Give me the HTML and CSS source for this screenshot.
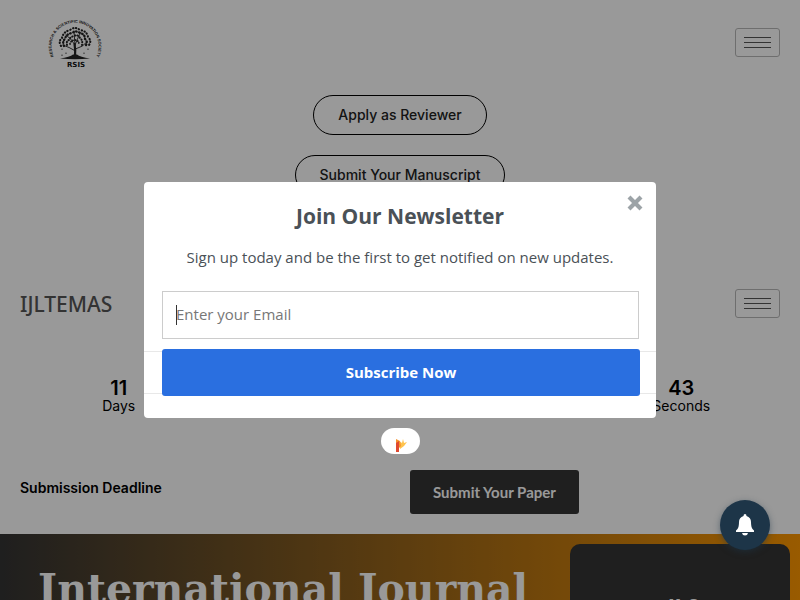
FILE: index.html
```html
<!DOCTYPE html>
<html lang="en">
<head>
<meta charset="utf-8">
<meta name="viewport" content="width=device-width, initial-scale=1">
<title>IJLTEMAS</title>
<link rel="stylesheet" href="styles.css">
</head>
<body>
<header class="bar bar-top">
  <a class="logo" href="#" aria-label="RSIS">
    <svg width="60" height="60" viewBox="0 0 60 60">
      <defs><path id="ring" d="M13 49.500A23.500 23.500 0 1 1 47 49.500"/></defs>
      <text class="ring-text" text-anchor="middle"><textPath href="#ring" startOffset="50%">RESEARCH &amp; SCIENTIFIC INNOVATION SOCIETY</textPath></text>
      <g fill="none" stroke="#222" stroke-linecap="round">
        <path stroke-width="2.200" d="M30 43C30.500 38 30.500 36 29.500 31"/>
        <path stroke-width="0.900" d="M30.500 38Q24 34 18 32M30.500 36Q38 34 42 29M30 32Q26 25 21 22M30 32Q33 24 36 19M30 32L29 18"/>
        <path stroke-width="2.100" stroke-dasharray="0.400 2.600" d="M16 33Q13 28 17 25Q18 19 25 17Q30 13 35 17Q42 18 43 24Q47 28 44 32"/>
        <path stroke-width="2.300" stroke-dasharray="0.600 2.500" d="M19 33Q17 28 20 26Q21 21 27 20Q31 17 35 20Q40 21 40 26Q43 29 41 32"/>
        <path stroke-width="2" stroke-dasharray="0.400 2.300" d="M22 32Q21 28 24 27Q25 24 29 23Q33 21 35 25Q38 27 37 32"/>
        <path stroke-width="1.800" stroke-dasharray="0.200 2.200" d="M25 31Q26 27 30 27Q34 27 34 32"/>
        <path stroke-width="1.200" d="M17 36V36.200M21 40V40.200M43 36V36.200M39 40V40.200M17 42V42.200"/>
      </g>
      <path fill="#222" d="M15 45.500Q25 44 28 41.500H32Q35 44 45 45.500Q30 47 15 45.500Z"/>
      <text class="logo-name" x="31" y="54" text-anchor="middle">RSIS</text>
    </svg>
  </a>
  <button class="toggle" type="button" aria-label="Menu"><i></i><i></i><i></i></button>
</header>

<nav class="actions">
  <a class="pill" href="#">Apply as Reviewer</a>
  <a class="pill" href="#">Submit Your Manuscript</a>
</nav>

<div class="bar bar-brand">
  <a class="brand" href="#">IJLTEMAS</a>
  <button class="toggle" type="button" aria-label="Site menu"><i></i><i></i><i></i></button>
</div>

<section class="countdown">
  <div class="unit"><b>11</b><span>Days</span></div>
  <div class="unit unit-last"><b>43</b><span>Seconds</span></div>
</section>

<section class="deadline">
  <p class="deadline-label">Submission Deadline</p>
  <div><a class="submit" href="#">Submit Your Paper</a></div>
</section>

<section class="hero">
  <h1>International Journal</h1>
  <aside class="call"><h2>Call for</h2></aside>
</section>

<div class="overlay">
  <div class="modal" role="dialog" aria-labelledby="modal-title">
    <button class="close" type="button" aria-label="Close">
      <svg width="16" height="16" viewBox="0 0 16 16"><path d="M2 2L14 14M14 2L2 14" stroke="#9ca3a7" stroke-width="4.200"/></svg>
    </button>
    <h2 class="modal-title" id="modal-title">Join Our Newsletter</h2>
    <p class="modal-text">Sign up today and be the first to get notified on new updates.</p>
    <form class="form">
      <div class="field"><input type="email" placeholder="Enter your Email" aria-label="Enter your Email"></div>
      <div class="form-end"><button class="subscribe" type="button">Subscribe Now</button></div>
    </form>
    <a class="badge" href="#" aria-label="Popup provider">
      <svg width="12" height="16" viewBox="0 0 12 16">
        <path fill="#ffc34d" d="M4 3L7 5L8 1L9 5L12 4L9 8L5 11Z"/>
        <path fill="#f6922d" d="M1 1L5 3L6 8L4 10L1 6Z"/>
        <path fill="#df4930" d="M1 5L4 3V14H1Z"/>
      </svg>
    </a>
  </div>
</div>

<button class="bell" type="button" aria-label="Notifications">
  <svg width="20" height="22" viewBox="0 0 20 22" fill="#fff">
    <path d="M10 0Q11.500 0 11.500 2Q16 3.500 16 8Q16 13 17.500 15L19 16.500V18H1V16.500L2.500 15Q4 13 4 8Q4 3.500 8.500 2Q8.500 0 10 0Z"/>
    <path d="M7 19H13Q12.500 21.500 10 21.500Q7.500 21.500 7 19Z"/>
  </svg>
</button>
</body>
</html>
```
FILE: styles.css
```css
* { box-sizing: border-box; }

body {
  margin: 0;
  height: 100vh;
  overflow: hidden;
  background: #fff;
  color: #000;
  font-family: Inter, "Liberation Sans", sans-serif;
}

h1, h2, p { margin: 0; }
a { color: inherit; text-decoration: none; }
button { font: inherit; cursor: pointer; }
svg { display: block; }

.bar {
  display: flex;
  align-items: center;
  justify-content: space-between;
  padding: 0 20px;
}
.bar-top { height: 85px; }
.bar-brand { height: 57px; margin-top: 80px; }

.logo { margin-left: 25px; }
.ring-text { font: bold 4px "Liberation Sans", sans-serif; fill: #222; }
.logo-name { font: bold 7px "DejaVu Sans", sans-serif; fill: #111; }

.brand { font: 500 21px "Noto Sans", sans-serif; color: #555; }

.toggle {
  display: flex;
  flex-direction: column;
  justify-content: center;
  gap: 4px;
  width: 45px;
  height: 29px;
  padding: 0 8px;
  border: 1px solid #b8b8b8;
  border-radius: 3px;
  background: none;
}
.toggle i { height: 1px; background: #555; }

.actions {
  display: flex;
  flex-direction: column;
  align-items: center;
  gap: 20px;
  padding-top: 10px;
}
.pill {
  height: 40px;
  padding: 0 24px;
  border: 1px solid #000;
  border-radius: 20px;
  font-size: 14px;
  font-weight: 500;
  line-height: 38px;
  color: #222;
}

.countdown {
  display: grid;
  grid-template-columns: repeat(4, 1fr);
  padding: 44px 25px 0;
}
.unit { text-align: center; }
.unit-last { grid-column: 4; }
.unit b { display: block; font-size: 20px; font-weight: 600; line-height: 24px; }
.unit span { display: block; font-size: 14px; line-height: 12px; }

.deadline {
  display: grid;
  grid-template-columns: 1fr 1fr;
  padding: 58px 0 20px;
}
.deadline-label { padding-left: 20px; font-size: 14px; font-weight: 600; line-height: 36px; }
.deadline > div { padding-left: 10px; }
.submit {
  display: inline-block;
  padding: 0 23px;
  border-radius: 3px;
  background: #343434;
  color: #fff;
  font: bold 15px/44px Lato, sans-serif;
  vertical-align: top;
}

.hero {
  display: grid;
  grid-template-columns: 1fr 220px;
  min-height: 300px;
  padding: 10px 10px 0 38px;
  background: linear-gradient(90deg, #343434, #ff9800);
}
.hero h1 {
  padding-top: 19px;
  color: #fff;
  font: bold 41px/52px "DejaVu Serif", serif;
  white-space: nowrap;
}
.call {
  padding-top: 48px;
  border-radius: 10px;
  background: #343434;
  color: #fff;
  text-align: center;
}
.call h2 { font: bold 22px/28px "Open Sans", sans-serif; }

.overlay {
  position: fixed;
  inset: 0;
  display: flex;
  align-items: center;
  justify-content: center;
  background: rgba(0, 0, 0, 0.4);
}
.modal {
  position: relative;
  width: 64%;
  padding: 19px 0 22px;
  border-radius: 4px;
  background: #fff;
  color: #4a5157;
  font-family: "Open Sans", sans-serif;
  text-align: center;
}
.modal-title { font-size: 21px; font-weight: 700; line-height: 30px; }
.modal-text { margin-top: 14px; font-size: 15px; line-height: 24px; }
.close {
  position: absolute;
  top: 13px;
  right: 13px;
  padding: 0;
  border: 0;
  background: none;
}

.form { margin-top: 22px; }
.field { position: relative; margin: 0 17px 0 18px; }
.field::before {
  content: "";
  position: absolute;
  top: 14px;
  left: 14px;
  width: 1px;
  height: 20px;
  background: #333;
}
.field input {
  display: block;
  width: 100%;
  height: 48px;
  padding: 0 13px 2px;
  border: 1px solid #ccc;
  border-radius: 0;
  background: #fff;
  font: 15px "Open Sans", sans-serif;
  outline: 0;
}
.field input::placeholder { color: #777; }

.form-end { position: relative; margin-top: 10px; padding: 0 16px 0 18px; }
.form-end::before {
  content: "";
  position: absolute;
  inset: 2px 0;
  border: solid #e8e8e8;
  border-width: 1px 0;
}
.subscribe {
  position: relative;
  display: block;
  width: 100%;
  height: 47px;
  padding: 0 0 2px;
  border: 0;
  border-radius: 3px;
  background: #2a6fe0;
  color: #fff;
  font-size: 15px;
  font-weight: 700;
}

.badge {
  position: absolute;
  top: calc(100% + 10px);
  left: calc(50% - 19px);
  display: flex;
  justify-content: center;
  align-items: flex-end;
  width: 39px;
  height: 26px;
  border-radius: 13px;
  background: #fff;
}

.bell {
  position: fixed;
  right: 30px;
  bottom: 50px;
  display: flex;
  align-items: center;
  justify-content: center;
  width: 50px;
  height: 50px;
  padding: 0;
  border: 0;
  border-radius: 50%;
  background: #1d3548;
  box-shadow: 0 2px 6px rgba(29, 53, 72, 0.5);
}
```
